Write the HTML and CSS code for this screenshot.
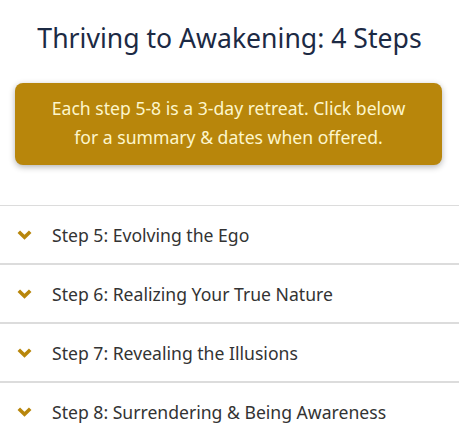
FILE: index.html
```html
<!DOCTYPE html>
<html>
<head>
<meta charset="utf-8">
<link rel="stylesheet" href="styles.css">
</head>
<body>
<div class="page">
  <h1 class="title">Thriving to Awakening: 4 Steps</h1>
  <div class="callout">Each step 5-8 is a 3-day retreat. Click below<br>for a summary &amp; dates when offered.</div>
  <ul class="steps">
    <li class="step"><svg class="chev" viewBox="0 0 15 10"><path d="M1.8 1.8 L7.5 7.3 L13.2 1.8" fill="none" stroke="currentColor" stroke-width="3.6"/></svg><span>Step 5: Evolving the Ego</span></li>
    <li class="step"><svg class="chev" viewBox="0 0 15 10"><path d="M1.8 1.8 L7.5 7.3 L13.2 1.8" fill="none" stroke="currentColor" stroke-width="3.6"/></svg><span>Step 6: Realizing Your True Nature</span></li>
    <li class="step"><svg class="chev" viewBox="0 0 15 10"><path d="M1.8 1.8 L7.5 7.3 L13.2 1.8" fill="none" stroke="currentColor" stroke-width="3.6"/></svg><span>Step 7: Revealing the Illusions</span></li>
    <li class="step"><svg class="chev" viewBox="0 0 15 10"><path d="M1.8 1.8 L7.5 7.3 L13.2 1.8" fill="none" stroke="currentColor" stroke-width="3.6"/></svg><span>Step 8: Surrendering &amp; Being Awareness</span></li>
  </ul>
</div>
</body>
</html>
```

FILE: styles.css
```css
html, body {
  margin: 0;
  padding: 0;
  background: #ffffff;
}
.page {
  font-family: "Noto Sans", "Open Sans", sans-serif;
  width: 459px;
}
.title {
  margin: 0;
  padding-top: 20px;
  text-align: center;
  font-weight: 400;
  font-size: 26.6px;
  line-height: 36px;
  color: #1c2a44;
}
.callout {
  margin: 27px 17px 0 15px;
  height: 82px;
  box-sizing: border-box;
  padding-top: 11px;
  background: #b8860b;
  border-radius: 8px;
  box-shadow: 0 2px 6px rgba(0,0,0,0.3);
  color: #fdf6cc;
  text-align: center;
  font-size: 17.6px;
  line-height: 29px;
}
.steps {
  list-style: none;
  margin: 40px 0 0 0;
  padding: 0;
  border-top: 1px solid #dcdcdc;
}
.step {
  display: flex;
  align-items: center;
  height: 57px;
  border-bottom: 2px solid #dcdcdc;
  color: #333333;
  font-size: 17.6px;
}
.step:last-child {
  border-bottom: none;
}
.chev {
  width: 15px;
  height: 10px;
  margin-left: 17px;
  margin-right: 20px;
  color: #b8860b;
}
```
